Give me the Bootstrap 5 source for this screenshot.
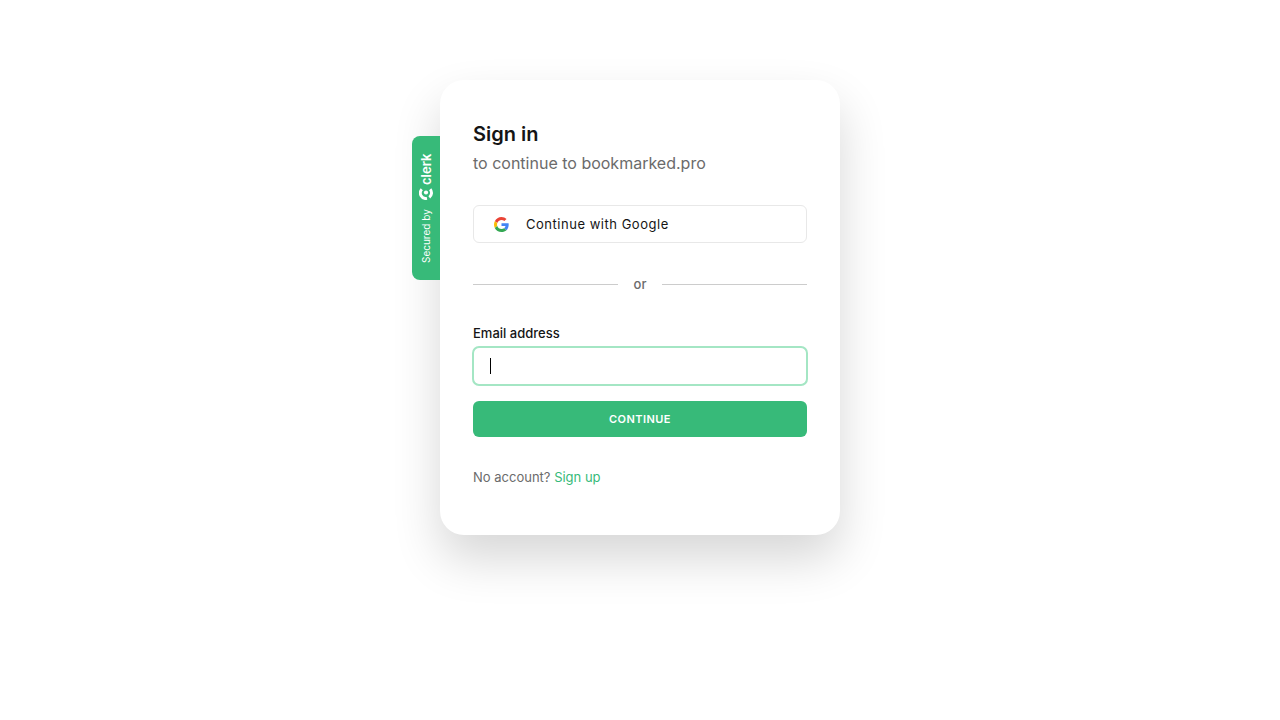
<!DOCTYPE html>
<html lang="en">
<head>
<meta charset="utf-8">
<meta name="viewport" content="width=device-width, initial-scale=1">
<title>Sign in</title>
<link href="https://cdn.jsdelivr.net/npm/bootstrap@5.3.0/dist/css/bootstrap.min.css" rel="stylesheet">
<style>
  :root { --brand: #37ba79; --ink: #151515; --muted-ink: #6b6b6b; }
  body { font-family: Inter, "Liberation Sans", sans-serif; font-size: 13px; line-height: 16px; color: var(--ink); background: #fff; }
  .auth-page { padding-top: 80px; padding-bottom: 80px; }
  .auth-wrap { width: 100%; max-width: 400px; }
  .auth-card { border: 0; border-radius: 24px; padding: 40px 33px 50px; box-shadow: 0 24px 48px rgba(0, 0, 0, .16); }
  .auth-title { font-size: 20px; line-height: 28px; font-weight: 600; }
  .auth-sub { font-size: 16px; line-height: 24px; margin-top: 3px; color: var(--muted-ink); }
  .btn-google { --bs-btn-border-color: #e8e8e8; --bs-btn-color: var(--ink); --bs-btn-hover-bg: #f7f7f7; margin-top: 30px; height: 38px; padding: 0 20px; gap: 17px; border-radius: 6px; font-size: 13px; line-height: 20px; letter-spacing: .04em; }
  .auth-or { margin: 33px 0; gap: 16px; font-weight: 500; color: var(--muted-ink); }
  .auth-or hr { border-color: #bbb; opacity: .75; }
  .auth-label { font-weight: 500; margin-bottom: 6px; }
  .auth-input, .auth-input:focus { height: 38px; padding: 0 16px; font-size: 13px; color: #000; border-color: #a4e6c4; border-radius: 6px; box-shadow: 0 0 0 1px #a4e6c4; caret-color: transparent; }
  .auth-caret { top: 11px; left: 17px; width: 1px; height: 16px; background: #000; pointer-events: none; }
  .auth-input:not(:placeholder-shown) { caret-color: #000; }
  .auth-input:not(:placeholder-shown) + .auth-caret { display: none; }
  .btn-brand { --bs-btn-bg: var(--brand); --bs-btn-color: #fff; --bs-btn-hover-bg: #2fa76b; --bs-btn-hover-color: #fff; border: 0; height: 36px; margin-top: 16px; border-radius: 6px; font-size: 11px; font-weight: 600; letter-spacing: .04em; }
  .auth-foot { margin-top: 32px; color: var(--muted-ink); }
  .auth-foot a { color: var(--brand); }
  .secured-tab { top: 56px; right: 100%; width: 28px; height: 144px; background: var(--brand); border-radius: 0 8px 8px 0; writing-mode: vertical-rl; transform: rotate(180deg); font-size: 10px; gap: 9px; }
  .secured-tab b { font-size: 13px; font-weight: 600; }
  .secured-tab .brand-mark { gap: 2px; }
</style>
</head>
<body>
<main class="auth-page d-flex justify-content-center">
  <div class="auth-wrap position-relative">
    <section class="card auth-card">
      <h1 class="auth-title mb-0">Sign in</h1>
      <p class="auth-sub mb-0">to continue to bookmarked.pro</p>
      <button type="button" class="btn btn-google d-flex align-items-center w-100">
        <svg width="15" height="15" viewBox="0 0 48 48" aria-hidden="true">
          <path fill="#EA4335" d="M24 9.5c3.5 0 6.700 1.200 9.200 3.600l6.900-6.900C35.900 2.400 30.500 0 24 0 14.600 0 6.500 5.400 2.600 13.200l8 6.200C12.400 13.700 17.700 9.500 24 9.500z"/>
          <path fill="#4285F4" d="M47 24.600c0-1.600-.2-3.100-.4-4.600H24v9h12.900c-.6 3-2.300 5.500-4.800 7.200l7.700 6C44.400 38 47 31.800 47 24.600z"/>
          <path fill="#FBBC05" d="M10.500 28.600c-.5-1.400-.8-3-.8-4.600s.3-3.100.8-4.600l-8-6.200C.9 16.500 0 20.100 0 24s.9 7.500 2.600 10.800z"/>
          <path fill="#34A853" d="M24 48c6.500 0 11.900-2.100 15.900-5.800l-7.700-6c-2.200 1.500-4.900 2.300-8.200 2.300-6.300 0-11.600-4.200-13.500-9.900l-8 6.200C6.500 42.600 14.600 48 24 48z"/>
        </svg>
        <span>Continue with Google</span>
      </button>
      <div class="auth-or d-flex align-items-center">
        <hr class="flex-grow-1 m-0"><span>or</span><hr class="flex-grow-1 m-0">
      </div>
      <form>
        <label class="auth-label d-block" for="email">Email address</label>
        <div class="position-relative">
          <input class="form-control auth-input" type="text" inputmode="email" id="email" name="email" placeholder=" " autofocus>
          <span class="auth-caret position-absolute" aria-hidden="true"></span>
        </div>
        <button type="submit" class="btn btn-brand d-block w-100 text-uppercase">Continue</button>
      </form>
      <p class="auth-foot mb-0">No account? <a class="text-decoration-none" href="#sign-up">Sign up</a></p>
    </section>
    <a href="#clerk" class="secured-tab position-absolute d-flex align-items-center justify-content-center text-white text-decoration-none">
      <span>Secured by</span>
      <span class="brand-mark d-flex align-items-center">
        <svg width="14" height="13" viewBox="0 0 14 13" fill="none" stroke="#fff" aria-hidden="true">
          <!-- drawn turned by 180 degrees, because the whole tab is turned -->
          <circle cx="7" cy="7.500" r="2.100" fill="#fff" stroke="none"/>
          <path stroke-width="2.900" d="M11.200 10.700A5.500 5.500 0 0 0 6 1.600"/>
          <path stroke-width="2.900" d="M3.700 2.700A5.500 5.500 0 0 0 2.800 10.700"/>
        </svg>
        <b>clerk</b>
      </span>
    </a>
  </div>
</main>
<script src="https://cdn.jsdelivr.net/npm/bootstrap@5.3.0/dist/js/bootstrap.bundle.min.js"></script>
</body>
</html>
